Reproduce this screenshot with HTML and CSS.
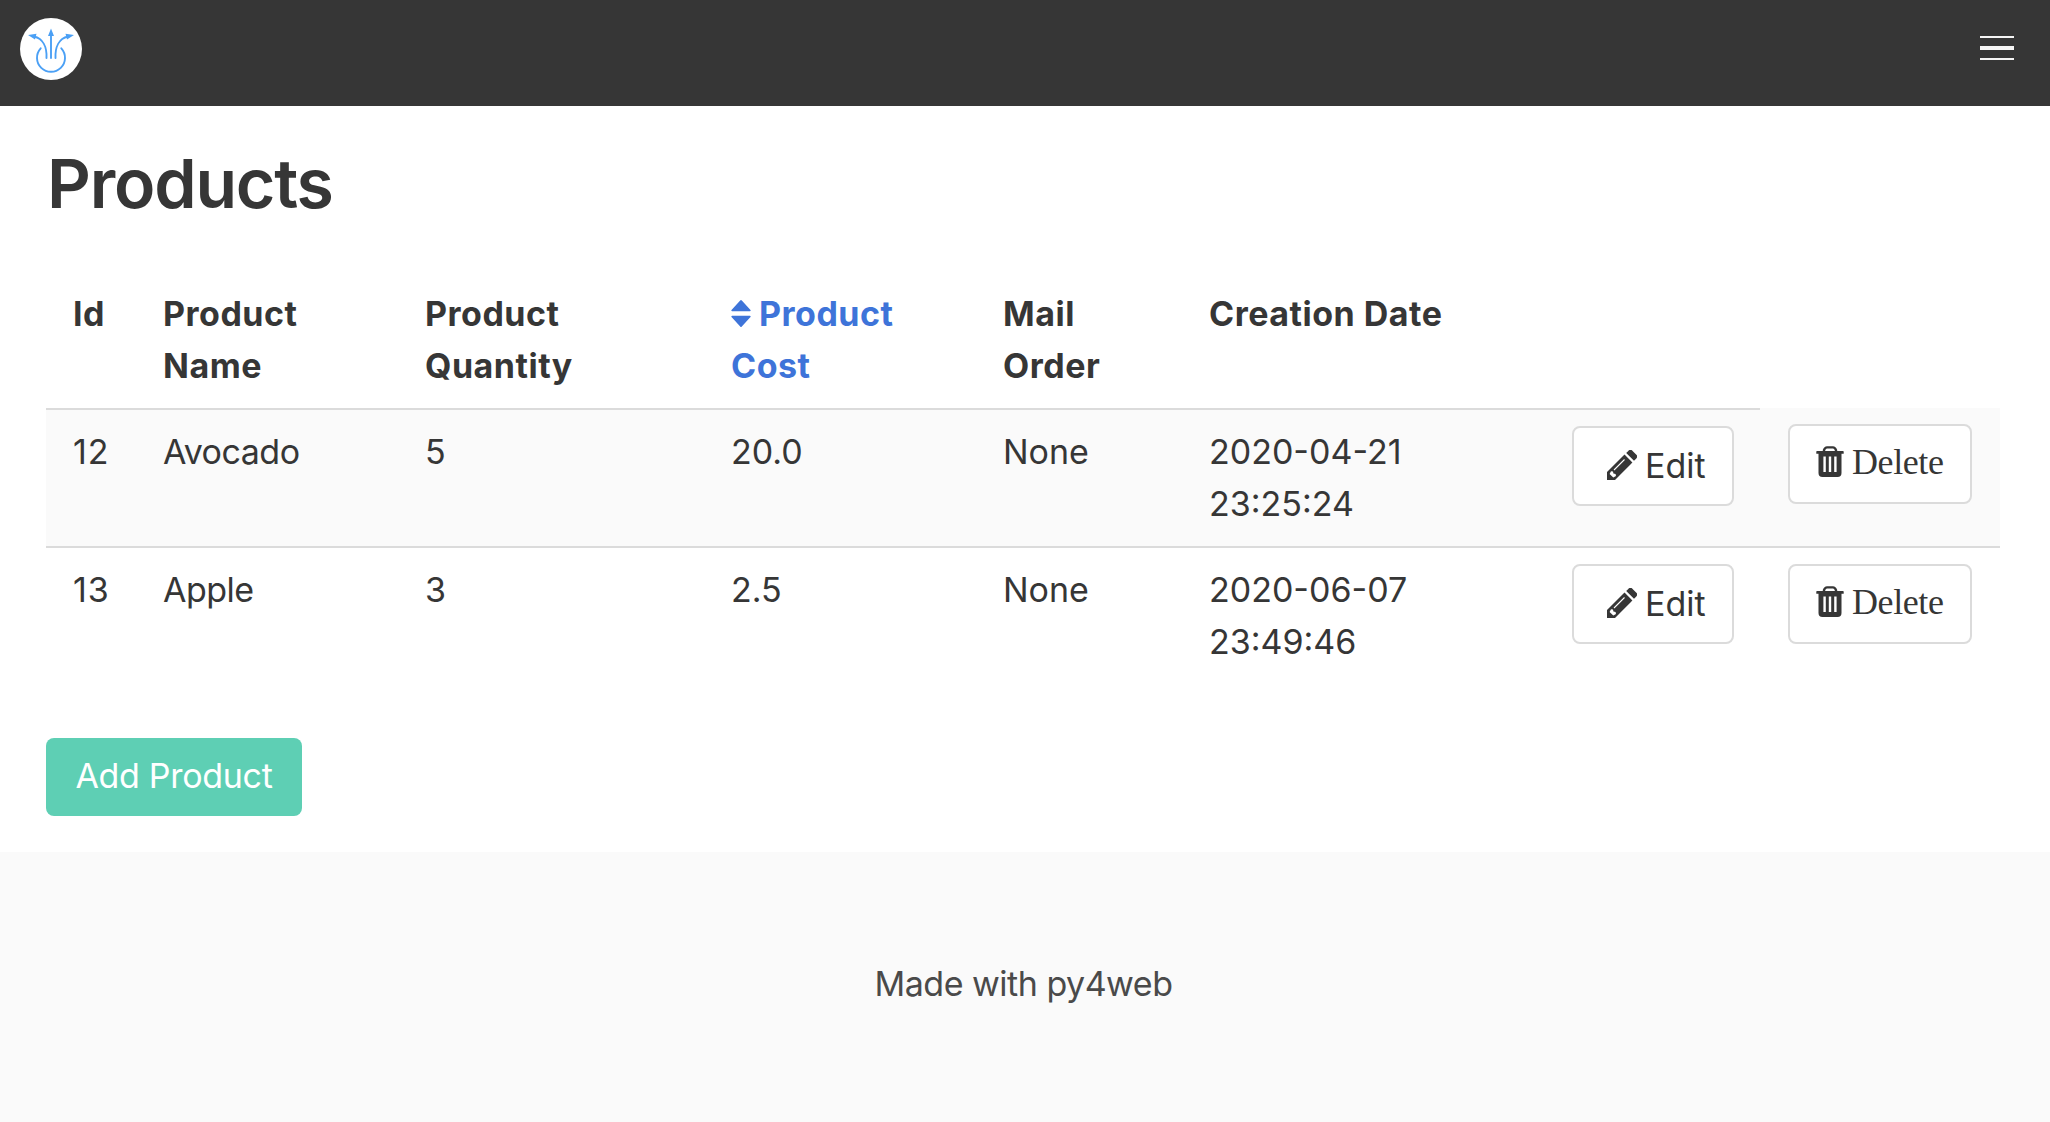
FILE: index.html
```html
<!DOCTYPE html>
<html lang="en">
<head>
<meta charset="utf-8">
<title>Products</title>
<link rel="stylesheet" href="styles.css">
</head>
<body>
<svg class="defs" aria-hidden="true">
  <symbol id="pencil" viewBox="0 0 30 30">
    <path fill="currentColor" d="M0 22 17.5 4.6 25.4 12.5 8 30H0z"/>
    <path fill="currentColor" d="M19.2 3 21.3.9a3 3 0 0 1 4.3 0l3.500 3.500a3 3 0 0 1 0 4.300L27 10.800z"/>
    <path fill="#fff" d="M2.600 24 4 21.200l2 .3.4 2 2.200.6.4 2L6.300 27.500z"/>
    <path stroke="#fff" stroke-width="1.100" d="M7 20 17.500 9.500"/>
  </symbol>
  <symbol id="trash" viewBox="0 0 28 31">
    <path fill="none" stroke="currentColor" stroke-width="2.400" d="M8 6V4.200Q9 1.400 11 1.400h6Q19 1.400 20 4.200V6"/>
    <path fill="currentColor" d="M1 5h26a.7.7 0 0 1 .7.7v2H25.500V27a4 4 0 0 1-4 4h-15a4 4 0 0 1-4-4V7.700H.3v-2A.7.7 0 0 1 1 5z"/>
    <path stroke="#fff" stroke-width="2.400" d="M8.600 10.500v15.500M14 10.500v15.500M19.400 10.500v15.500"/>
  </symbol>
</svg>

<nav class="navbar">
  <a class="brand" href="#" aria-label="Home">
    <svg class="logo" viewBox="0 0 62 62">
      <circle cx="31" cy="31" r="31" fill="#fff"/>
      <g fill="none" stroke="#4ba0f5" stroke-width="1.900" stroke-linecap="round">
        <path d="M20.700 30.300a14 14 0 1 0 20.600 0"/>
        <path d="M31 40V15"/>
        <path d="M26.500 40C27 29 23 20.500 14 18.500"/>
        <path d="M35.500 40C35 29 39 20.500 48 18.500"/>
      </g>
      <path fill="#4ba0f5" d="M31 10.500 34 18h-6zM8 17l8.500-1.200-1.500 5.800zM54 17l-8.500-1.200 1.500 5.800z"/>
    </svg>
  </a>
  <button class="burger" aria-label="Menu"><span></span><span></span><span></span></button>
</nav>

<main class="content">
  <h1 class="title">Products</h1>
  <table class="grid">
    <colgroup><col class="c-id"><col class="c-name"><col class="c-qty"><col class="c-cost"><col class="c-mail"><col class="c-date"><col class="c-edit"><col class="c-delete"></colgroup>
    <thead>
      <tr>
        <th>Id</th>
        <th>Product<br>Name</th>
        <th>Product<br>Quantity</th>
        <th><a class="sort" href="#"><svg class="sort-icon" viewBox="0 0 20 27"><path fill="currentColor" d="M9.200.600a1 1 0 0 1 1.600 0l8.700 9.300a.8.8 0 0 1-.6 1.300H1.100a.8.8 0 0 1-.6-1.300zM9.200 26.400a1 1 0 0 0 1.600 0l8.700-9.300a.8.8 0 0 0-.6-1.300H1.100a.8.8 0 0 0-.6 1.300z"/></svg>Product<br>Cost</a></th>
        <th>Mail<br>Order</th>
        <th>Creation Date</th>
        <th></th>
        <td class="blank"></td>
      </tr>
    </thead>
    <tbody>
      <tr class="striped">
        <td class="id">12</td><td class="name">Avocado</td><td>5</td><td>20.0</td><td>None</td><td>2020-04-21<br>23:25:24</td>
        <td><a class="button edit" href="#"><svg class="pencil"><use href="#pencil"/></svg><span>Edit</span></a></td>
        <td><a class="button delete" href="#"><svg class="trash"><use href="#trash"/></svg><span>Delete</span></a></td>
      </tr>
      <tr>
        <td class="id">13</td><td class="name">Apple</td><td>3</td><td>2.5</td><td>None</td><td>2020-06-07<br>23:49:46</td>
        <td><a class="button edit" href="#"><svg class="pencil"><use href="#pencil"/></svg><span>Edit</span></a></td>
        <td><a class="button delete" href="#"><svg class="trash"><use href="#trash"/></svg><span>Delete</span></a></td>
      </tr>
    </tbody>
  </table>
  <a class="add" href="#">Add Product</a>
</main>

<footer class="footer"><p>Made with py4web</p></footer>
</body>
</html>
```
FILE: styles.css
```css
* { box-sizing: border-box; }
body {
  margin: 0;
  min-height: 100vh;
  display: flex;
  flex-direction: column;
  background: #fff;
  color: #363636;
  font: 34px/52px Inter, "Liberation Sans", sans-serif;
}
a { color: inherit; text-decoration: none; }
.defs { display: none; }

.navbar {
  height: 106px;
  display: flex;
  justify-content: space-between;
  align-items: flex-start;
  padding: 18px 36px 0 20px;
  background: #363636;
}
.brand, .logo { display: block; width: 62px; height: 62px; }
.burger {
  display: flex;
  flex-direction: column;
  align-items: stretch;
  gap: 8px;
  width: 34px;
  margin: 18px 0 0;
  padding: 0;
  border: 0;
  background: none;
}
.burger span { height: 2px; background: #f5f5f5; }
.burger span:nth-child(2) { height: 4px; }

.content { height: 746px; padding: 37px 50px 0 46px; }
.title {
  height: 129px;
  margin: 0;
  padding-left: 1px;
  font-size: 68px;
  line-height: 80px;
  font-weight: 600;
  letter-spacing: -1.2px;
}

.grid { width: 1954px; border-collapse: separate; border-spacing: 0; table-layout: fixed; }
.c-id { width: 90px; }
.c-name { width: 262px; }
.c-qty { width: 306px; }
.c-cost { width: 272px; }
.c-mail { width: 206px; }
.c-date { width: 363px; }
.c-edit { width: 215px; }
.c-delete { width: 240px; }
.grid th, .grid td { padding: 16px 27px; text-align: left; vertical-align: top; }
.grid th {
  height: 138px;
  font-weight: 700;
  letter-spacing: .5px;
  border-bottom: 2px solid #dbdbdb;
  white-space: nowrap;
}
.grid tbody td { height: 138px; }
.grid .id { letter-spacing: .8px; }
.grid .name { letter-spacing: -.5px; }
.striped td { background: #fafafa; border-bottom: 2px solid #dbdbdb; }
.grid .blank { padding: 0; background: linear-gradient(#fafafa, #fafafa) bottom / 100% 2px no-repeat; }
.sort { color: #3e74d9; }
.sort-icon { width: 20px; height: 27px; margin-right: 8px; vertical-align: -1px; }

.button {
  display: flex;
  align-items: center;
  height: 80px;
  border: 2px solid #dbdbdb;
  border-radius: 8px;
  background: #fff;
}
.edit { width: 162px; padding: 0 0 2px 33px; gap: 8px; }
.edit span { padding-top: 2px; }
.delete {
  width: 184px;
  margin-left: 1px;
  padding: 0 0 5px 26px;
  gap: 8px;
  font-family: "Liberation Serif", serif;
  font-size: 36px;
  letter-spacing: -.4px;
}
.delete span { padding-top: 1px; }
.striped .delete { margin-top: -2px; }
.pencil { width: 30px; height: 30px; }
.trash { width: 28px; height: 31px; }

.add {
  display: flex;
  justify-content: center;
  width: 256px;
  height: 78px;
  margin-top: 52px;
  padding-top: 12px;
  border-radius: 8px;
  background: #5ecfb4;
  color: #fff;
  letter-spacing: -.3px;
}
.footer {
  flex: 1;
  padding: 106px 3px 0 0;
  background: #fafafa;
  color: #4a4a4a;
  text-align: center;
  letter-spacing: -.5px;
}
.footer p { margin: 0; }
```
